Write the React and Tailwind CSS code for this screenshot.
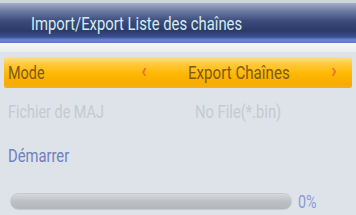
import React from "react";

export default function App() {
  const font = { fontFamily: '"Roboto", "Liberation Sans", sans-serif' };
  const t = "inline-block origin-left scale-x-[0.8] whitespace-nowrap";
  return (
    <div className="w-[356px] h-[215px] bg-[#dde3e9] overflow-hidden flex flex-col" style={font}>
      <div className="h-[3px] bg-[#cfd5dd]" />
      <div className="h-[41px] flex items-center pl-[31px] bg-[linear-gradient(to_bottom,#a3aec6_0%,#6d7ba3_20%,#3b4b7c_45%,#2c3a69_70%,#3a4f92_85%,#7086d2_92%,#6076c0_100%)]">
        <span className={`${t} scale-x-[0.78] text-[19px] text-[#d4ecef] leading-none`}>Import/Export Liste des chaînes</span>
      </div>
      <div className="h-[9px] bg-[linear-gradient(to_bottom,#f6f7f3,#e9edee)]" />
      <div className="flex-1 flex flex-col px-[4px] pt-[5px]">
        <div className="h-[31px] shrink-0 flex items-center rounded-[2px] bg-[linear-gradient(to_bottom,#ffe08a_0%,#ffc838_25%,#ffb800_55%,#f8ab00_85%,#f2b020_100%)]">
          <span className="w-[137px] pl-[4px]"><span className={`${t} text-[18px] text-[#7b5a12]`}>Mode</span></span>
          <span className="w-[47px]"><span className={`${t} scale-x-[0.9] font-bold text-[21px] leading-none text-[#ec7428]`}>‹</span></span>
          <span className="w-[143px]"><span className={`${t} scale-x-[0.84] text-[18px] text-[#7b5a12]`}>Export Chaînes</span></span>
          <span><span className={`${t} scale-x-[0.9] font-bold text-[21px] leading-none text-[#ec7428]`}>›</span></span>
        </div>
        <div className="h-[46px] shrink-0 flex items-center pt-[2px]">
          <span className="w-[191px] pl-[4px]"><span className={`${t} text-[18px] text-[#c4cad2]`}>Fichier de MAJ</span></span>
          <span><span className={`${t} scale-x-[0.82] text-[18px] text-[#c4cad2]`}>No File(*.bin)</span></span>
        </div>
        <div className="h-[44px] shrink-0 flex items-center">
          <span className="pl-[4px]"><span className={`${t} scale-x-[0.82] text-[18px] text-[#6f80bd]`}>Démarrer</span></span>
        </div>
        <div className="flex items-center pl-[6px] mt-[10px]">
          <div className="w-[282px] h-[17px] rounded-full border border-[#c6cacf] bg-[linear-gradient(to_bottom,#d6d9dc,#bcc0c4_50%,#b4b8bc)]" />
          <span className="ml-[6px]"><span className={`${t} text-[18px] text-[#8a9bd6]`}>0%</span></span>
        </div>
      </div>
    </div>
  );
}
